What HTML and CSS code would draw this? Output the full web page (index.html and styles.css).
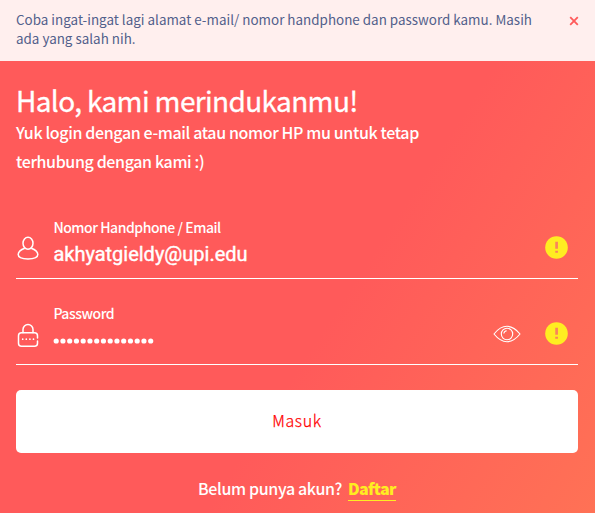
FILE: index.html
```html
<!DOCTYPE html>
<html lang="id">
<head>
<meta charset="utf-8">
<title>Login</title>
<link rel="stylesheet" href="styles.css">
</head>
<body>
<div class="alert">
  <p class="alert-text">Coba ingat-ingat lagi alamat e-mail/ nomor handphone dan password kamu. Masih<br>ada yang salah nih.</p>
  <svg class="close" viewBox="0 0 10 10"><path d="M1.2 1.2 8.8 8.8M8.8 1.2 1.2 8.8"/></svg>
</div>
<main class="login">
  <h1 class="title">Halo, kami merindukanmu!</h1>
  <p class="subtitle">Yuk login dengan e-mail atau nomor HP mu untuk tetap<br>terhubung dengan kami :)</p>
  <div class="field">
    <svg class="icon" viewBox="0 0 22 26"><ellipse cx="11" cy="7.3" rx="5" ry="6"/><path d="M7.8 12.2C4 13.5 1.2 15.5 1.2 18.6c0 2.9 3.8 4.4 9.8 4.4s9.8-1.5 9.8-4.4c0-3.1-2.8-5.1-6.6-6.4"/></svg>
    <div class="control">
      <span class="label">Nomor Handphone / Email</span>
      <span class="value">akhyatgieldy@upi.edu</span>
    </div>
    <svg class="warn" viewBox="0 0 24 24"><circle cx="12" cy="12" r="11.8"/><path d="M10.7 6h2.8v7.4h-2.8zM10.7 15.3h2.8v2.2h-2.8z"/></svg>
  </div>
  <div class="field field-password">
    <svg class="icon lock" viewBox="0 0 22 26"><path d="M6 10V6.5a5 5 0 0 1 10 0V10M20.5 15v-2.3a3 3 0 0 0-3-3h-13a3 3 0 0 0-3 3v7.5a3 3 0 0 0 3 3h13a3 3 0 0 0 3-3V18"/><path class="dots" d="M5.7 16.2h.01M9.3 16.2h.01M12.9 16.2h.01M16.5 16.2h.01"/></svg>
    <div class="control">
      <span class="label">Password</span>
      <svg class="mask" viewBox="0 0 102 6"><path d="M3.2 3H98.5"/></svg>
    </div>
    <svg class="eye" viewBox="0 0 28 18"><path d="M1 9C5 4 9 1.3 14 1.3S23 4 27 9C23 14 19 16.7 14 16.7S5 14 1 9z"/><circle cx="14" cy="9" r="5.7"/><path d="M10.8 8.5c.2-1.6 1.3-2.6 2.9-2.8"/></svg>
    <svg class="warn" viewBox="0 0 24 24"><circle cx="12" cy="12" r="11.8"/><path d="M10.7 6h2.8v7.4h-2.8zM10.7 15.3h2.8v2.2h-2.8z"/></svg>
  </div>
  <button class="submit">Masuk</button>
  <p class="signup"><span>Belum punya akun?</span><a class="signup-link">Daftar</a></p>
</main>
</body>
</html>
```

FILE: styles.css
```css
* { box-sizing: border-box; }
body {
  margin: 0;
  height: 513px;
  overflow: hidden;
  display: flex;
  flex-direction: column;
  font-family: "Noto Sans CJK SC", "Noto Sans", sans-serif;
  color: #fff;
}
p, h1 { margin: 0; white-space: nowrap; }
svg { display: block; flex: none; fill: none; }
.alert {
  height: 61px;
  flex: none;
  padding: 10px 16px 0;
  display: flex;
  justify-content: space-between;
  background: #ffefee;
}
.alert-text { font-size: 13.4px; line-height: 19px; letter-spacing: .015px; color: #52608b; }
.close { width: 10px; height: 10px; margin: 6px 0 0; stroke: #ff5a5a; stroke-width: 1.8; }
.login {
  flex: 1;
  padding: 22px 17px 0 16px;
  background: linear-gradient(123deg, #ff5a5a 0%, #ff5a5a 56%, #ff7355 103%);
}
.title { font-size: 28px; line-height: 34px; font-weight: 400; letter-spacing: -.64px; -webkit-text-stroke: .3px #fff; }
.subtitle { margin-top: 1px; font-size: 16px; line-height: 29px; font-weight: 500; letter-spacing: -.37px; }
.field {
  height: 86px;
  margin-top: 17px;
  padding: 24px 10px 0 0;
  display: flex;
  border-bottom: 1px solid #fff;
}
.field-password { margin-top: 0; }
.icon { width: 22px; height: 26px; margin: 19px 0 0 1px; stroke: #fff; stroke-width: 1.5; }
.lock { margin-top: 20px; stroke-linecap: round; }
.dots { stroke-width: 1.7; }
.control { flex: 1; margin-left: 14.4px; display: flex; flex-direction: column; align-items: flex-start; }
.label { font-size: 14px; line-height: 20px; font-weight: 500; height: 20px; letter-spacing: -.46px; white-space: nowrap; }
.value { font: 400 20px/34px Roboto, sans-serif; letter-spacing: -.01px; -webkit-text-stroke: .4px #fff; }
.mask { width: 102px; height: 6px; margin-top: 15px; stroke: #fff; stroke-width: 5.2; stroke-linecap: round; stroke-dasharray: 0 6.75; }
.warn { width: 23px; height: 23px; margin-top: 19px; }
.warn circle { fill: #ffed21; }
.warn path { fill: #f9845c; }
.eye { width: 28px; height: 18px; margin: 22px 24px 0 0; stroke: #fff; stroke-width: 1.1; }
.submit {
  display: block;
  width: 100%;
  height: 63px;
  margin-top: 25px;
  padding: 0 0 3px;
  border: 0;
  border-radius: 5px;
  background: #fff;
  color: #ff0000;
  font: 300 16px/24px "Noto Sans CJK SC", sans-serif;
  letter-spacing: .6px;
  -webkit-text-stroke: .25px #ff0000;
}
.signup { margin-top: 23px; display: flex; justify-content: center; gap: 6px; font-size: 16px; line-height: 24px; font-weight: 500; letter-spacing: -.36px; }
.signup-link { color: #ffed21; font-weight: 900; letter-spacing: -.6px; border-bottom: 1px solid #ffed21; }
```
